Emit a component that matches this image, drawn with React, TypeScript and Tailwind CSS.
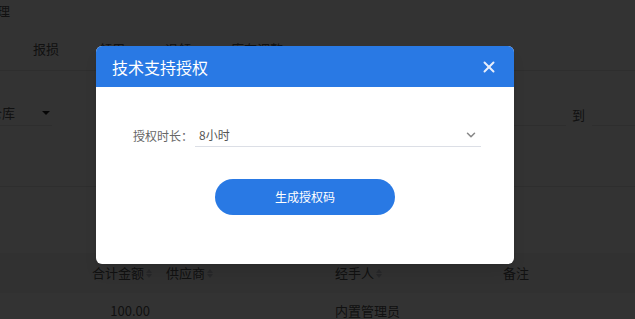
import { ChevronDown, X } from 'lucide-react'

const font = { fontFamily: '"Noto Sans CJK SC", "Noto Sans", sans-serif' }

function SortIcon() {
  return (
    <span className="ml-[2px] inline-flex flex-col gap-[1px]">
      <span className="h-0 w-0 border-x-[3px] border-b-[4px] border-x-transparent border-b-[#c0c4cc]" />
      <span className="h-0 w-0 border-x-[3px] border-t-[4px] border-x-transparent border-t-[#c0c4cc]" />
    </span>
  )
}

export default function App() {
  const tabs = ['报损', '领用', '退领', '库存调整']

  return (
    <div className="relative h-[319px] w-[635px] overflow-hidden bg-white text-[13px] text-[#555]" style={font}>
      {/* page behind the dialog */}
      <div className="flex h-[22px] items-center">
        <span className="-ml-[16px]">管理</span>
      </div>
      <div className="flex h-[49px] items-center gap-[40px] border-b border-[#e6e6e6] pl-[33px] pt-[5px]">
        {tabs.map((t) => (
          <span key={t}>{t}</span>
        ))}
      </div>
      <div className="flex h-[116px] items-start justify-between border-b border-[#e6e6e6] pt-[30px]">
        <div className="flex h-[25px] w-[52px] items-center justify-between border-b border-[#e6e6e6] pr-[2px]">
          <span className="-ml-[11px]">仓库</span>
          <span className="h-0 w-0 border-x-[4px] border-t-[4px] border-x-transparent border-t-[#222]" />
        </div>
        <div className="flex h-[25px] items-center pt-[2px]">
          <div className="h-full w-[52px] border-b border-[#e6e6e6]" />
          <span className="w-[26px] pl-[6px]">到</span>
          <div className="h-full w-[43px] border-b border-[#e6e6e6]" />
        </div>
      </div>
      <div className="h-[66px]" />
      <div className="flex h-[40px] items-center bg-[#f3f3f3]">
        <div className="flex w-[152px] items-center justify-end">
          合计金额
          <SortIcon />
        </div>
        <div className="flex w-[183px] items-center pl-[14px]">
          供应商
          <SortIcon />
        </div>
        <div className="flex w-[168px] items-center">
          经手人
          <SortIcon />
        </div>
        <div>备注</div>
      </div>
      <div className="flex h-[36px] items-center">
        <div className="w-[152px] pr-[2px] text-right">100.00</div>
        <div className="w-[183px]" />
        <div>内置管理员</div>
      </div>

      {/* dialog */}
      <div className="absolute inset-0 bg-black/80 pl-[96px] pt-[46px]">
        <div className="w-[418px] rounded-[6px] bg-white shadow-lg">
          <div className="flex h-[41px] items-center justify-between rounded-t-[6px] bg-[#2979e4] pl-[16px] pr-[16px]">
            <span className="text-[16px] text-white">技术支持授权</span>
            <X size={18} strokeWidth={2.6} className="text-[#e8eefb]" />
          </div>
          <div className="flex h-[177px] flex-col pt-[31px]">
            <div className="flex h-[29px] items-end pl-[37px] pr-[33px]">
              <span className="w-[62px] shrink-0 whitespace-nowrap pb-[2px] text-[12px] text-[#666]">授权时长：</span>
              <div className="flex h-full flex-1 items-end justify-between border-b border-[#dcdfe6] pb-[2px] pl-[4px] pr-[3px]">
                <span className="text-[12px] text-[#555]">8小时</span>
                <ChevronDown size={14} strokeWidth={2.6} className="mb-[2px] text-[#888]" />
              </div>
            </div>
            <button className="mx-auto mt-[32px] h-[36px] w-[180px] rounded-full bg-[#2979e4] text-[12px] text-white">
              生成授权码
            </button>
          </div>
        </div>
      </div>
    </div>
  )
}
